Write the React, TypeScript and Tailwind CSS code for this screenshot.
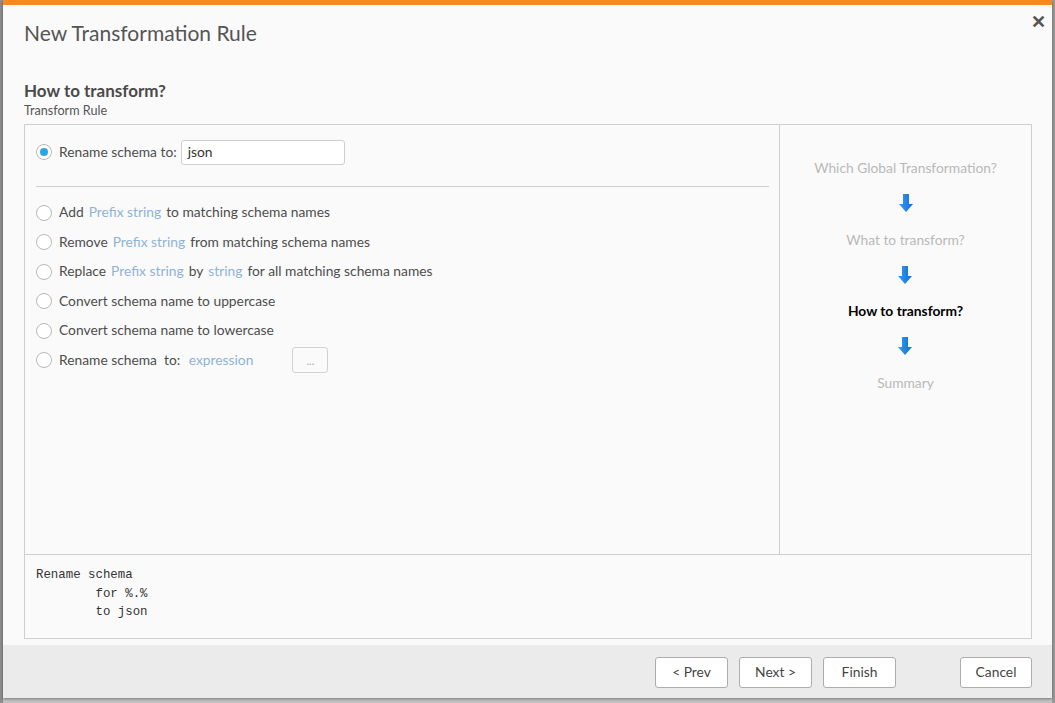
import { type ReactNode } from "react";

const FONT = "font-['Segoe_UI','Lato','Noto_Sans',sans-serif]";

function Radio({ checked = false }: { checked?: boolean }) {
  return (
    <span className="flex h-[16px] w-[16px] shrink-0 items-center justify-center rounded-full border border-[#b9b9b9] bg-white">
      {checked && <span className="h-[8px] w-[8px] rounded-full bg-[#2aa6e2]" />}
    </span>
  );
}

function Link({ children }: { children: ReactNode }) {
  return <span className="mx-[5px] text-[#8fb3d6]">{children}</span>;
}

function Option({ children }: { children: ReactNode }) {
  return (
    <div className="flex h-[29.5px] items-center gap-[7px]">
      <Radio />
      <span>{children}</span>
    </div>
  );
}

function Arrow() {
  return (
    <svg width="14" height="20" viewBox="0 0 14 20" className="my-[16.25px]">
      <defs>
        <linearGradient id="ag" x1="0" y1="0" x2="1" y2="0">
          <stop offset="0" stopColor="#3a9bf0" />
          <stop offset="1" stopColor="#0b6fd0" />
        </linearGradient>
      </defs>
      <path d="M4 1h6v10h4l-7 8-7-8h4z" fill="url(#ag)" />
    </svg>
  );
}

const STEPS = [
  { label: "Which Global Transformation?", active: false },
  { label: "What to transform?", active: false },
  { label: "How to transform?", active: true },
  { label: "Summary", active: false },
];

export default function App() {
  return (
    <div className={`flex h-[703px] w-[1055px] bg-[#c4c4c4] ${FONT}`}>
      <div className="w-[3px] bg-[#8e8e8e]" />
      <div className="relative flex h-[698px] w-[1049px] flex-col border-t-[5px] border-[#f7891f] bg-[#fafafa] shadow-[0_1px_3px_rgba(0,0,0,0.4)]">
        <button className="absolute right-[6px] top-[7px] text-[18px] font-bold leading-none text-[#555]">
          ✕
        </button>
        <div className="pl-[21px] pt-[14px] text-[21px] leading-[28px] text-[#555]">
          New Transformation Rule
        </div>
        <div className="pl-[21px] pt-[34px] text-[17px] font-bold leading-[20px] text-[#4a4a4a]">
          How to transform?
        </div>
        <div className="pl-[21px] pt-[1px] text-[12.6px] leading-[18px] text-[#555]">Transform Rule</div>

        <div className="ml-[21px] mt-[4px] flex w-[1008px] flex-col border border-[#cfcfcf]">
          <div className="flex h-[429px]">
            <div className="w-[755px] border-r border-[#cfcfcf] px-[11px] pt-[14px] text-[13.8px] text-[#4d4d4d]">
              <div className="flex h-[26px] items-center gap-[7px]">
                <Radio checked />
                <span>Rename schema to:</span>
                <div className="ml-[-3px] flex h-[25px] w-[164px] items-center rounded-[3px] border border-[#cfcfcf] bg-white px-[6px] text-[13.8px] text-[#333]">
                  json
                </div>
              </div>
              <div className="mt-[21px] mb-[11px] h-px w-[733px] bg-[#cfcfcf]" />
              <Option>
                Add<Link>Prefix string</Link>to matching schema names
              </Option>
              <Option>
                Remove<Link>Prefix string</Link>from matching schema names
              </Option>
              <Option>
                Replace<Link>Prefix string</Link>by<Link>string</Link>for all matching schema names
              </Option>
              <Option>Convert schema name to uppercase</Option>
              <Option>Convert schema name to lowercase</Option>
              <div className="flex h-[29.5px] items-center gap-[7px]">
                <Radio />
                <span>
                  Rename schema&nbsp; to:<Link>&nbsp;expression</Link>
                </span>
                <span className="ml-[27px] flex h-[26px] w-[36px] items-start justify-center rounded-[3px] border border-[#d3d3d3] bg-[#fafafa] pt-[4px] text-[11px] leading-[18px] text-[#aaa]">
                  ...
                </span>
              </div>
            </div>
            <div className="flex w-[251px] flex-col items-center pt-[33px] text-[13.8px]">
              {STEPS.map((s, i) => (
                <div key={s.label} className="flex flex-col items-center">
                  <div
                    className={
                      s.active
                        ? "h-[19px] leading-[19px] font-bold text-black"
                        : "h-[19px] leading-[19px] text-[#b9b9b9]"
                    }
                  >
                    {s.label}
                  </div>
                  {i < STEPS.length - 1 && <Arrow />}
                </div>
              ))}
            </div>
          </div>
          <pre className="h-[84px] border-t border-[#cfcfcf] px-[11px] pt-[11px] font-['Liberation_Mono',monospace] text-[12.4px] leading-[18.5px] text-[#333]">
{`Rename schema
        for %.%
        to json`}
          </pre>
        </div>

        <div className="mt-[6px] flex flex-1 items-start bg-[#ebebeb] pt-[12px] pr-[20px] text-[13.8px] text-[#444]">
          <div className="flex-1" />
          <div className="flex gap-[11px]">
            <button className="h-[31px] w-[73px] rounded-[3px] border border-[#adadad] bg-white">&lt; Prev</button>
            <button className="h-[31px] w-[73px] rounded-[3px] border border-[#adadad] bg-white">Next &gt;</button>
            <button className="h-[31px] w-[73px] rounded-[3px] border border-[#adadad] bg-white">Finish</button>
          </div>
          <button className="ml-[64px] h-[31px] w-[72px] rounded-[3px] border border-[#adadad] bg-white">Cancel</button>
        </div>
      </div>
      <div className="w-[3px] bg-[#9a9a9a]" />
    </div>
  );
}
